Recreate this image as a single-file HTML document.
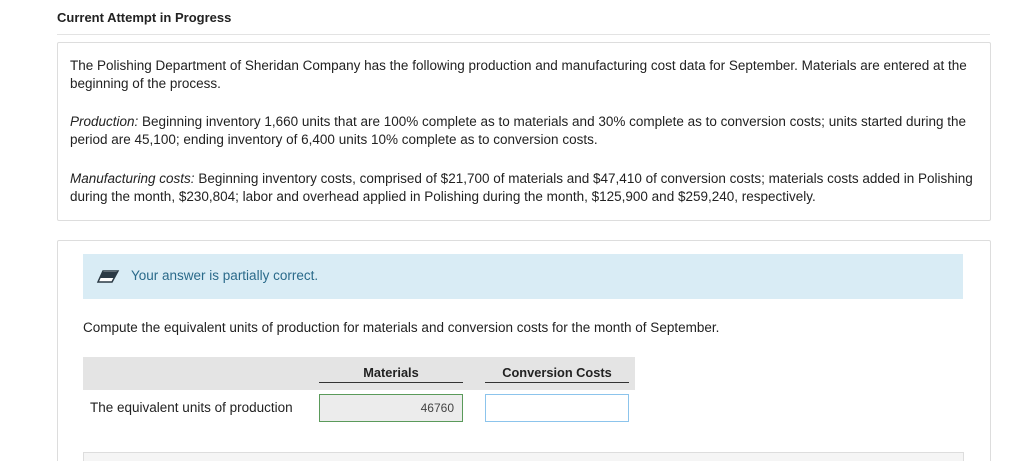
<!DOCTYPE html>
<html><head><style>
html,body{margin:0;width:1024px;height:461px;overflow:hidden}
body{background:#fff;font-family:"Liberation Sans",sans-serif;color:#222;position:relative}
.a{position:absolute;white-space:nowrap;font-size:13.5px;letter-spacing:0}
</style></head><body>
<div class="a" style="left:57px;top:10px;font-weight:bold;font-size:13px">Current Attempt in Progress</div>
<div style="position:absolute;left:57px;top:34px;width:933px;height:1px;background:#e3e3e3"></div>
<div style="position:absolute;left:57px;top:42px;width:932px;height:177px;border:1px solid #ddd;border-radius:2px"></div>
<div class="a" style="left:70px;top:57px;line-height:18px">The Polishing Department of Sheridan Company has the following production and manufacturing cost data for September. Materials are entered at the<br>beginning of the process.</div>
<div class="a" style="left:70px;top:113px;line-height:18px"><i>Production:</i> Beginning inventory 1,660 units that are 100% complete as to materials and 30% complete as to conversion costs; units started during the<br>period are 45,100; ending inventory of 6,400 units 10% complete as to conversion costs.</div>
<div class="a" style="left:70px;top:170px;line-height:18px"><i>Manufacturing costs:</i> Beginning inventory costs, comprised of $21,700 of materials and $47,410 of conversion costs; materials costs added in Polishing<br>during the month, $230,804; labor and overhead applied in Polishing during the month, $125,900 and $259,240, respectively.</div>
<div style="position:absolute;left:57px;top:240px;width:932px;height:240px;border:1px solid #ddd;border-radius:2px"></div>
<div style="position:absolute;left:83px;top:254px;width:880px;height:45px;background:#d9ecf5"></div>
<svg style="position:absolute;left:96px;top:269px" width="24" height="16" viewBox="0 0 24 16"><path d="M7 2 L22 2 L16 13 L2 13 Z" fill="#fff" stroke="#2b3a45" stroke-width="1.5"/><path d="M6.5 3 L21.5 3 L18 9 L3.5 9 Z" fill="#2b3a45"/></svg>
<div class="a" style="left:131px;top:268px;color:#2a6a8a">Your answer is partially correct.</div>
<div class="a" style="left:83px;top:320px">Compute the equivalent units of production for materials and conversion costs for the month of September.</div>
<div style="position:absolute;left:83px;top:357px;width:552px;height:33px;background:#e4e4e4"></div>
<div class="a" style="left:319px;top:365px;width:144px;text-align:center;font-weight:bold;font-size:12.8px;border-bottom:1px solid #333;padding-bottom:2px">Materials</div>
<div class="a" style="left:485px;top:365px;width:144px;text-align:center;font-weight:bold;font-size:12.8px;border-bottom:1px solid #333;padding-bottom:2px">Conversion Costs</div>
<div class="a" style="left:90px;top:400px">The equivalent units of production</div>
<div style="position:absolute;left:319px;top:394px;width:142px;height:26px;border:1px solid #5a9a5a;background:#ececec"></div>
<div class="a" style="left:319px;top:401px;width:135px;text-align:right;font-size:12px;color:#444">46760</div>
<div style="position:absolute;left:485px;top:394px;width:142px;height:26px;border:1px solid #8cc4ec;background:#fff"></div>
<div style="position:absolute;left:83px;top:452px;width:879px;height:20px;border:1px solid #ddd;background:#f5f5f5"></div>
</body></html>
